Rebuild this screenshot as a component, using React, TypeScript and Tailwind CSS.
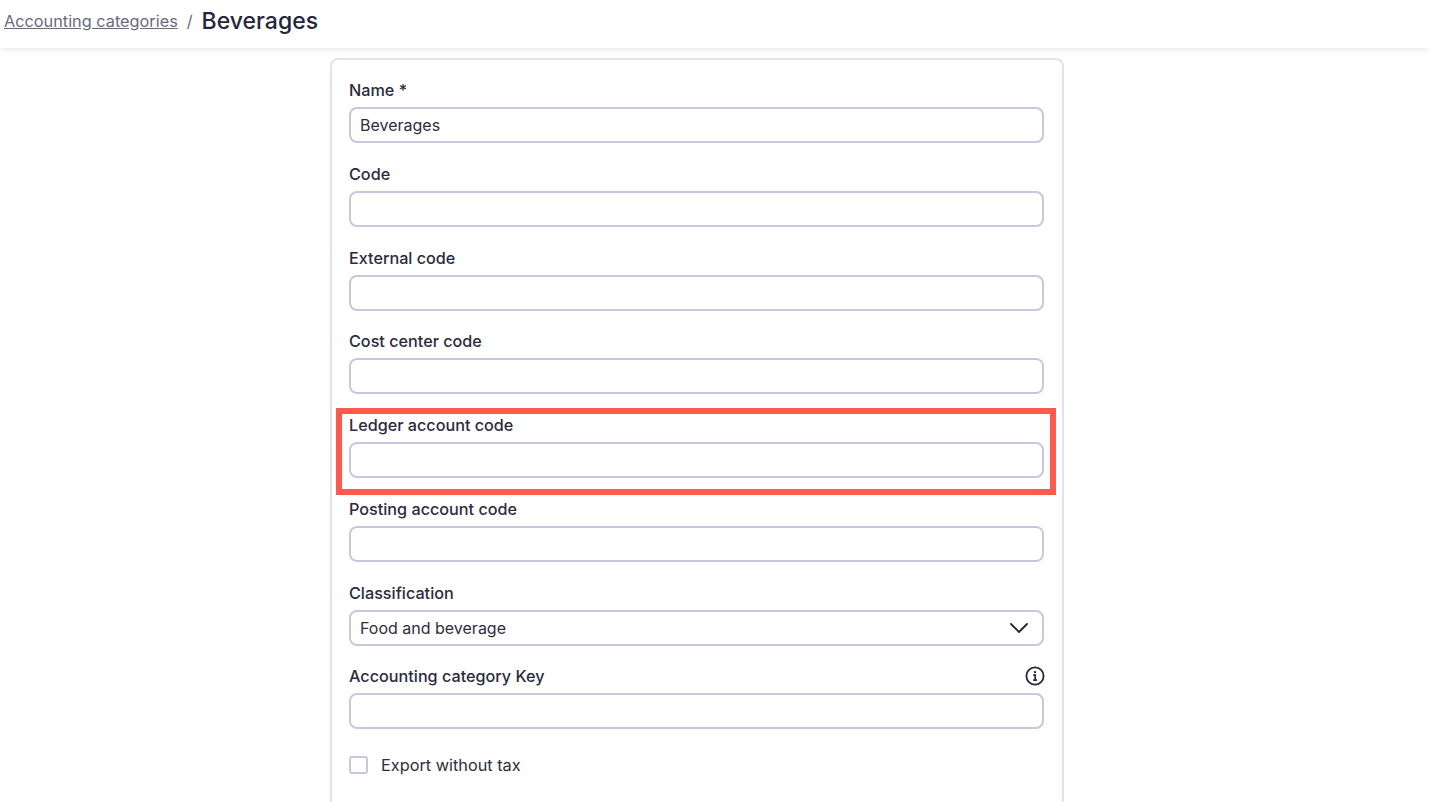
import { ReactNode } from "react";
import { ChevronDown } from "lucide-react";

const inputCls =
  "h-9 w-full rounded-lg border-2 border-[#c9c7de] bg-white px-[9px] text-[16px] text-[#2d2d3d] flex items-center justify-between";

const Field = ({ label, value, extra, children }: { label: string; value?: string; extra?: ReactNode; children?: ReactNode }) => (
  <div className="mb-[18.75px]">
    <div className="mb-[5px] flex h-6 items-center justify-between text-[16.2px] leading-6 font-[450] text-[#2b2b3e]">
      <span>{label}</span>
      {extra}
    </div>
    <div className={inputCls}>
      <span>{value}</span>
      {children}
    </div>
  </div>
);

const InfoIcon = () => (
  <svg width="20" height="20" viewBox="0 0 20 20" fill="none" stroke="#26263a" className="-mr-px">
    <circle cx="10" cy="10" r="8.6" strokeWidth="1.8" />
    <circle cx="10" cy="6.1" r="1.2" fill="#26263a" stroke="none" />
    <path d="M8.2 9.2H10.2V14M8.2 14.2H12" strokeWidth="1.7" />
  </svg>
);

export default function App() {
  return (
    <div className="relative h-[802px] overflow-hidden bg-white font-['Inter',sans-serif]">
      <header className="relative z-10 flex h-12 items-center gap-[9px] bg-white pb-[6px] pl-1 shadow-[0_1px_6px_rgba(30,30,60,0.12)]">
        <a className="text-[16.3px] text-[#6b6a7c] underline">Accounting categories</a>
        <span className="text-[16.3px] text-[#6b6a7c]">/</span>
        <h1 className="text-[23px] font-medium text-[#26263a]">Beverages</h1>
      </header>

      <main className="mt-[10px] ml-[330px] w-[734px] rounded-t-lg border-2 border-b-0 border-[#e3e2f0] pt-[18px] pr-[18px] pb-10 pl-[17px]">
        <Field label="Name *" value="Beverages" />
        <Field label="Code" />
        <Field label="External code" />
        <Field label="Cost center code" />
        <Field label="Ledger account code" />
        <Field label="Posting account code" />
        <Field label="Classification" value="Food and beverage">
          <ChevronDown className="-mr-[2px] h-8 w-8 text-[#26263a]" strokeWidth={1.4} />
        </Field>
        <Field label="Accounting category Key" extra={<InfoIcon />} />
        <label className="flex items-center gap-[13px] pt-[5px] text-[16.3px] text-[#2d2d3d]">
          <span className="h-[18px] w-[19px] rounded-[3px] border-2 border-[#c9c7de] bg-white" />
          Export without tax
        </label>
      </main>

      <div className="absolute top-[408px] left-[336px] h-[87px] w-[720px] border-[6px] border-[#ff5a4d]" />
    </div>
  );
}
